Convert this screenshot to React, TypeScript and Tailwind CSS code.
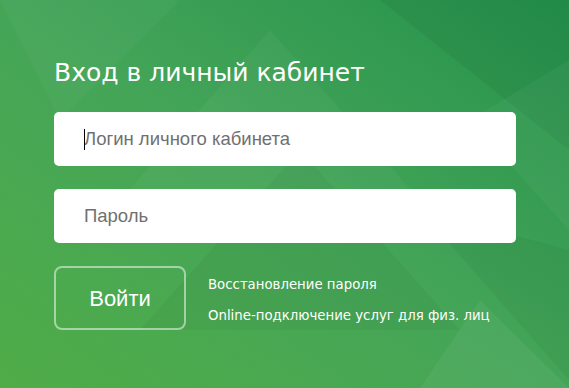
import { useState } from "react";

export default function App() {
  const [login, setLogin] = useState("");
  const [password, setPassword] = useState("");

  return (
    <div className="relative w-[569px] h-[388px] overflow-hidden bg-gradient-to-tr from-[#50ac47] via-[#44a558] to-[#22924c]">
      {/* faint triangles in the background */}
      <svg
        className="absolute inset-0 pointer-events-none"
        width="569"
        height="388"
        viewBox="0 0 569 388"
      >
        <polygon points="270,30 420,200 120,200" fill="#ffffff" opacity="0.04" />
        <polygon points="380,0 569,0 569,150" fill="#000000" opacity="0.05" />
        <polygon points="300,150 460,330 140,330" fill="#000000" opacity="0.035" />
        <polygon points="470,120 569,230 569,60" fill="#ffffff" opacity="0.04" />
        <polygon points="420,210 569,380 569,250" fill="#000000" opacity="0.04" />
        <polygon points="0,0 180,0 60,120" fill="#ffffff" opacity="0.03" />
        <polygon points="480,300 569,388 420,388" fill="#ffffff" opacity="0.05" />
      </svg>

      <div className="relative px-[54px] pt-[57px] font-['DejaVu_Sans',sans-serif]">
        <h1 className="text-white text-[25px] leading-[32px]">
          Вход в личный кабинет
        </h1>

        <form className="mt-[23px] flex flex-col gap-[23px] w-[462px]">
          <div className="relative">
            <input
              type="text"
              value={login}
              onChange={(e) => setLogin(e.target.value)}
              placeholder="Логин личного кабинета"
              className="w-full h-[54px] rounded-[5px] bg-white pl-[30px] text-[18.5px] text-[#333] placeholder:text-[#707070] outline-none font-['Liberation_Sans',Arial,sans-serif]"
            />
            <span className="absolute left-[30px] top-[17px] w-px h-[21px] bg-black" />
          </div>
          <input
            type="password"
            value={password}
            onChange={(e) => setPassword(e.target.value)}
            placeholder="Пароль"
            className="w-full h-[54px] rounded-[5px] bg-white pl-[30px] text-[18.5px] text-[#333] placeholder:text-[#707070] outline-none font-['Liberation_Sans',Arial,sans-serif]"
          />
        </form>

        <div className="mt-[23px] flex items-center">
          <button
            type="button"
            className="w-[132px] h-[64px] rounded-[8px] border-2 border-white/50 text-white text-[22px] font-['Liberation_Sans',Arial,sans-serif]"
          >
            Войти
          </button>
          <div className="ml-[22px] pt-[4px] flex flex-col gap-[13px] text-white text-[13.3px] leading-[18px]">
            <a href="#">Восстановление пароля</a>
            <a href="#">Online-подключение услуг для физ. лиц</a>
          </div>
        </div>
      </div>
    </div>
  );
}
